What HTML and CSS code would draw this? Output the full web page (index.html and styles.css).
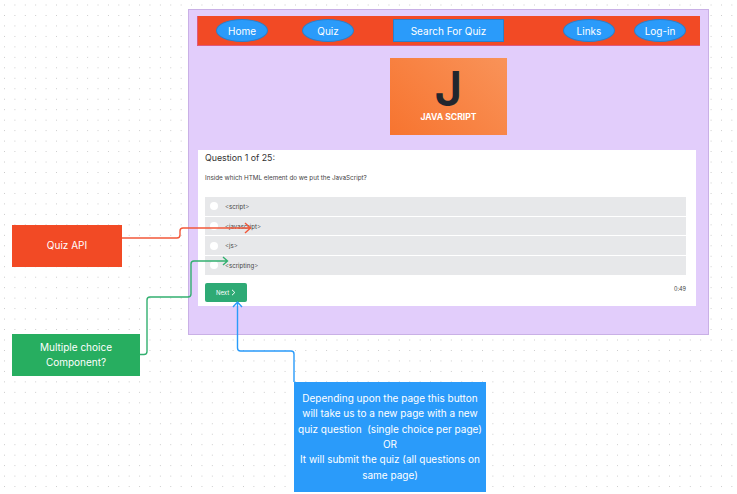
FILE: index.html
```html
<!DOCTYPE html>
<html lang="en">
<head>
  <meta charset="UTF-8" />
  <meta name="viewport" content="width=device-width, initial-scale=1.0"/>
  <title>Quiz Page Wireframe</title>
  <link rel="stylesheet" href="styles.css">
</head>
<body>
  <div id="board">
    <div id="pageFrame">
      <nav class="navbar">
        <a class="pill pill-home">Home</a>
        <a class="pill pill-quiz">Quiz</a>
        <a class="search-btn">Search For Quiz</a>
        <a class="pill pill-links">Links</a>
        <a class="pill pill-login">Log-in</a>
      </nav>

      <div class="logo">
        <div class="logo-letter">J</div>
        <div class="logo-name">JAVA SCRIPT</div>
      </div>

      <div class="quiz-card">
        <div class="question-count">Question 1 of 25:</div>
        <p class="question-text">Inside which HTML element do we put the JavaScript?</p>
        <div class="options">
          <div class="option"><span class="radio"></span>&lt;script&gt;</div>
          <div class="option"><span class="radio"></span>&lt;javascript&gt;</div>
          <div class="option"><span class="radio"></span>&lt;js&gt;</div>
          <div class="option"><span class="radio"></span>&lt;scripting&gt;</div>
        </div>
        <div class="quiz-footer">
          <button class="next-btn">Next
            <svg width="5" height="7" viewBox="0 0 5 7"><path d="M1 .8 3.800 3.500 1 6.200" fill="none" stroke="#fff" stroke-width="1"/></svg>
          </button>
          <span class="time">0:49</span>
        </div>
      </div>
    </div>

    <div class="note note-api">Quiz API</div>
    <div class="note note-choice">Multiple choice<br>Component?</div>
    <div class="note note-next">
      Depending upon the page this button<br>
      will take us to a new page with a new<br>
      quiz question&nbsp; (single choice per page)<br>
      OR<br>
      It will submit the quiz (all questions on<br>
      same page)
    </div>

    <!-- connectors between the notes and the page -->
    <svg id="arrows" width="737" height="494" viewBox="0 0 737 494">
      <path class="arrow-red" d="M122 238H177Q180 238 180 235V231Q180 228 183 228H250M245 223 250.500 228 245 233"/>
      <path class="arrow-green" d="M140 354.500H144Q147 354.500 147 351.500V300Q147 297 150 297H188Q191 297 191 294V264Q191 261 194 261H227M223 257 227.500 261 223 265"/>
      <path class="arrow-blue" d="M237.500 302V348Q237.500 351 240.500 351H291Q294 351 294 354V382M233 307 237.500 302 242 307"/>
    </svg>
  </div>
</body>
</html>
```

FILE: styles.css
```css
* {
  box-sizing: border-box;
}
body {
  margin: 0;
  font-family: Inter, "Noto Sans", sans-serif;
  background: #fff;
  overflow: hidden;
}
#board {
  position: relative;
  width: 737px;
  height: 494px;
  background-image: radial-gradient(circle at center, #c9c9c9 0.6px, transparent 0.9px);
  background-size: 10.4px 10.47px;
  background-position: -0.7px -0.235px;
}
#pageFrame {
  position: absolute;
  left: 188px;
  top: 9px;
  width: 521px;
  height: 326px;
  padding: 6px 8px 0;
  background: #e2cdfb;
  border: 1px solid #c9b0e6;
}
.navbar {
  display: flex;
  align-items: center;
  height: 30px;
  padding-left: 19px;
  background: #f24a25;
  border: 1px solid #e0597a;
  border-width: 0 0 1px 1px;
  color: #fff;
  font-size: 10px;
}
.navbar a {
  display: flex;
  align-items: center;
  justify-content: center;
  height: 23px;
  background: #2a9bfa;
  border: 1px solid #2b7fc9;
}
.pill {
  width: 52px;
  border-radius: 50%;
}
.pill-home {
  margin-left: -1px;
}
.pill-quiz {
  margin-left: 34px;
}
.navbar .search-btn {
  width: 111px;
  margin-left: 39px;
}
.pill-links {
  margin-left: 59px;
}
.pill-login {
  margin-left: 19px;
}
.logo {
  display: flex;
  flex-direction: column;
  align-items: center;
  width: 117px;
  height: 77px;
  margin: 12px auto 0;
  background: linear-gradient(45deg, #f7742f, #f99359);
  color: #fff;
}
.logo-letter {
  height: 47px;
  margin-top: 7px;
  color: #22262e;
  font-size: 48px;
  font-weight: 600;
  line-height: 47px;
}
.logo-name {
  margin-top: -1px;
  font-size: 8.600px;
  font-weight: 700;
  line-height: 12px;
}
.quiz-card {
  width: 498px;
  height: 156px;
  margin: 15px 0 0 1px;
  padding: 1px 10px 0 7px;
  background: #fff;
  color: #444;
}
.question-count {
  font-size: 8.800px;
  line-height: 13px;
  color: #333;
}
.question-text {
  margin: 8px 0 0;
  font-size: 6.300px;
  line-height: 13px;
}
.options {
  display: flex;
  flex-direction: column;
  gap: 1px;
  margin-top: 12px;
}
.option {
  display: flex;
  align-items: center;
  height: 18.700px;
  padding-left: 5px;
  background: #e7e8ea;
  font-size: 6.100px;
}
.radio {
  width: 8px;
  height: 8px;
  margin-right: 7px;
  border-radius: 50%;
  background: #fff;
}
.quiz-footer {
  display: flex;
  justify-content: space-between;
  margin-top: 8px;
}
.next-btn {
  display: flex;
  align-items: center;
  justify-content: center;
  gap: 2px;
  width: 42px;
  height: 19px;
  padding: 0;
  background: #2eaa75;
  border: 0;
  border-radius: 2px;
  color: #fff;
  font-family: inherit;
  font-size: 6px;
}
.time {
  margin-top: 2px;
  font-size: 5.500px;
  line-height: 8px;
}
.note {
  position: absolute;
  display: flex;
  align-items: center;
  justify-content: center;
  color: #fff;
  text-align: center;
  font-size: 10px;
  line-height: 15.400px;
}
.note-api {
  left: 12px;
  top: 225px;
  width: 110px;
  height: 42px;
  background: #f24a25;
}
.note-choice {
  left: 12px;
  top: 334px;
  width: 128px;
  height: 42px;
  background: #27ae60;
}
.note-next {
  left: 294px;
  top: 382px;
  width: 192px;
  height: 110px;
  background: #2a9bfa;
}
#arrows {
  position: absolute;
  left: 0;
  top: 0;
  fill: none;
  stroke-width: 1.400;
}
.arrow-red {
  stroke: #f2583a;
}
.arrow-green {
  stroke: #33b070;
}
.arrow-blue {
  stroke: #2a9bfa;
}
```
